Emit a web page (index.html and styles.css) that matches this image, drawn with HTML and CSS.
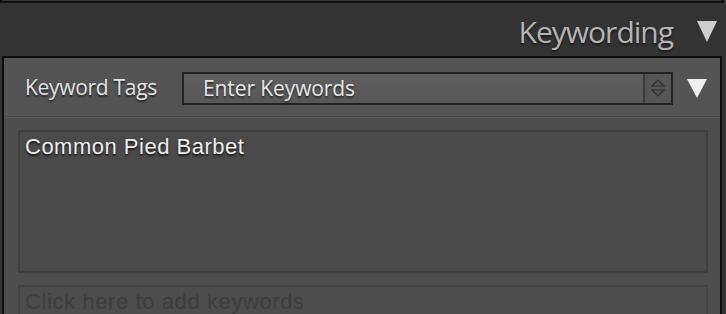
FILE: index.html
```html
<!DOCTYPE html>
<html lang="en">
<head>
    <meta charset="UTF-8">
    <title>Keywording</title>
    <link rel="stylesheet" href="styles.css">
</head>
<body>
    <div class="prev-panel"></div>

    <div class="header">
        <span class="header-title">Keywording</span>
        <span class="tri tri-header"></span>
    </div>

    <div class="panel">
        <div class="tags-row">
            <span class="tags-label">Keyword Tags</span>
            <div class="tags-select">
                <span class="select-text">Enter Keywords</span>
                <span class="stepper">
                    <svg width="16" height="20" viewBox="0 0 16 20">
                        <path d="M2 8 L8 2 L14 8 Z" fill="none" stroke="#2e2e2e" stroke-width="1.2"/>
                        <path d="M2 12 L8 18 L14 12 Z" fill="none" stroke="#2e2e2e" stroke-width="1.2"/>
                    </svg>
                </span>
            </div>
            <span class="tri tri-row"></span>
        </div>

        <div class="keyword-list">
            <div class="keyword">Common Pied Barbet</div>
        </div>

        <div class="keyword-add">Click here to add keywords</div>
    </div>
</body>
</html>
```

FILE: styles.css
```css
body {
    margin: 0;
    background: #333;
    width: 726px;
    height: 314px;
    overflow: hidden;
    font-family: "Open Sans", "Liberation Sans", sans-serif;
}
.prev-panel {
    height: 1px;
    margin: 0 2px 0 0;
    border: 2px solid #0e0e0e;
    border-top: none;
    background: #333;
}
.header {
    height: 53px;
    display: flex;
    align-items: center;
    justify-content: flex-end;
    padding-right: 9px;
}
.header-title {
    color: #b4b4b4;
    font-size: 30px;
    letter-spacing: -1px;
    margin-right: 24px;
    margin-top: 4px;
    text-shadow: 0 2px 2px rgba(0,0,0,0.5);
}
.tri {
    width: 0;
    height: 0;
    border-left: 10px solid transparent;
    border-right: 10px solid transparent;
}
.tri-header {
    border-top: 21px solid #cfcfcf;
    margin-top: 3px;
}
.panel {
    margin-left: 2px;
    width: 716px;
    border: 2px solid #0e0e0e;
    border-bottom: none;
    background: #4d4d4d;
    height: 256px;
    overflow: hidden;
}
.tags-row {
    height: 58px;
    display: flex;
    align-items: center;
    background: #545454;
    border-bottom: 1px solid #474747;
    box-shadow: 0 1px 0 #565656;
}
.tags-label {
    color: #e2e2e2;
    font-size: 21px;
    letter-spacing: -0.3px;
    margin-left: 21px;
    width: 157px;
    text-shadow: 0 2px 2px rgba(0,0,0,0.6);
}
.tags-select {
    width: 487px;
    height: 29px;
    border: 2px solid #232323;
    background: linear-gradient(#5e5e5e, #585858);
    display: flex;
    align-items: center;
    margin-top: 2px;
}
.select-text {
    flex: 1;
    color: #e6e6e6;
    font-size: 21px;
    letter-spacing: -0.1px;
    padding-left: 19px;
    text-shadow: 0 2px 2px rgba(0,0,0,0.6);
}
.stepper {
    width: 26px;
    height: 29px;
    border-left: 2px solid #3a3a3a;
    background: #555;
    display: flex;
    align-items: center;
    justify-content: center;
}
.tri-row {
    border-top: 19px solid #eee;
    margin-left: 14px;
    margin-top: 2px;
}
.keyword-list {
    margin: 13px 12px 0 14px;
    height: 139px;
    border: 2px solid #3f3f3f;
    background: #4a4a4a;
}
.keyword {
    font-family: "Liberation Sans", "Roboto", sans-serif;
    color: #ececec;
    font-size: 22px;
    letter-spacing: 0.5px;
    padding: 2px 0 0 5px;
    text-shadow: 0 2px 2px rgba(0,0,0,0.7);
}
.keyword-add {
    margin: 12px 12px 0 14px;
    height: 40px;
    border: 2px solid #444;
    border-bottom: none;
    background: #4c4c4c;
    font-family: "Liberation Sans", "Roboto", sans-serif;
    color: #3e3e3e;
    font-size: 22px;
    letter-spacing: 0.6px;
    padding: 2px 0 0 5px;
}
```
